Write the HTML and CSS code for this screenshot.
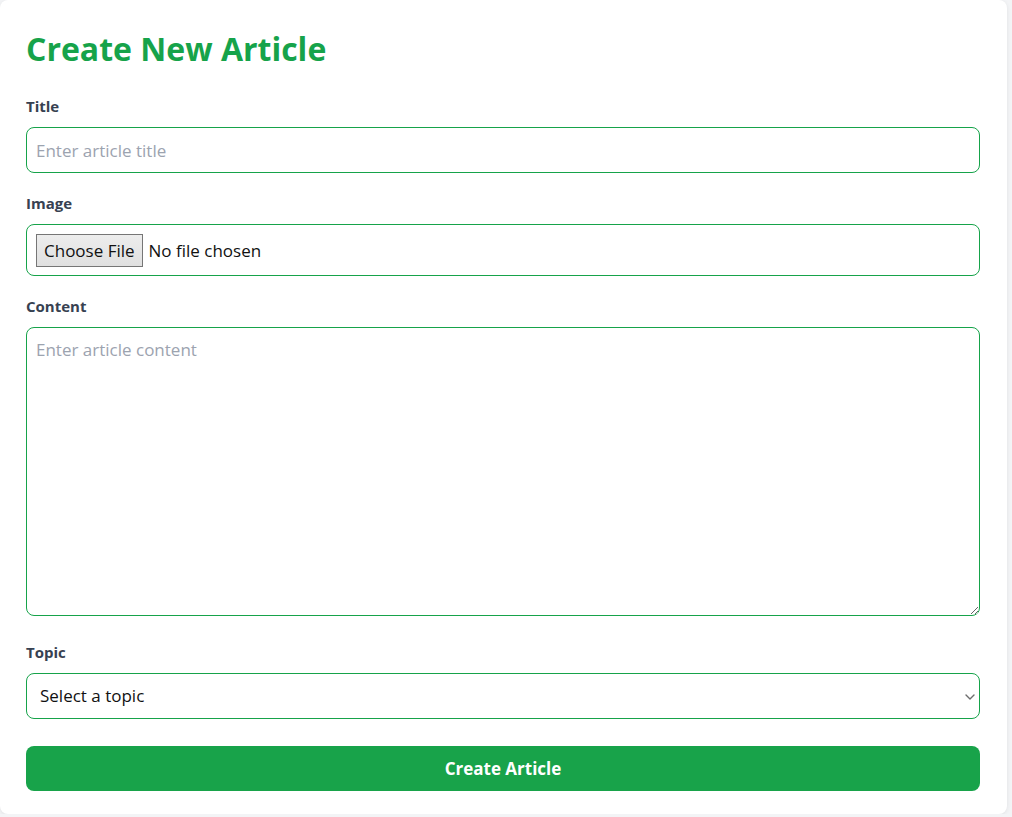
FILE: index.html
```html
<!DOCTYPE html>
<html lang="en">
<head>
<meta charset="utf-8">
<title>Create New Article</title>
<link rel="stylesheet" href="styles.css">
</head>
<body>
<main class="card">
  <h1 class="heading">Create New Article</h1>
  <form class="form">
    <div class="field">
      <label class="label" for="title">Title</label>
      <input class="control" id="title" type="text" placeholder="Enter article title">
    </div>
    <div class="field">
      <label class="label" for="image">Image</label>
      <input class="control control-file" id="image" type="file">
    </div>
    <div class="field field-area">
      <label class="label" for="content">Content</label>
      <textarea class="control control-area" id="content" placeholder="Enter article content"></textarea>
    </div>
    <div class="field">
      <label class="label" for="topic">Topic</label>
      <div class="select-wrap">
        <select class="control control-select" id="topic">
          <option>Select a topic</option>
        </select>
        <svg class="chevron" width="10" height="6" viewBox="0 0 10 6" aria-hidden="true">
          <path d="M1 1 L5 5 L9 1" fill="none" stroke="#6d6d6d" stroke-width="1.4" stroke-linecap="round" stroke-linejoin="round"/>
        </svg>
      </div>
    </div>
    <button class="submit" type="button">Create Article</button>
  </form>
</main>
</body>
</html>
```
FILE: styles.css
```css
* { box-sizing: border-box; }
html, body { margin: 0; }
body {
  background: #f3f4f6;
  font-family: "Open Sans", "Noto Sans", sans-serif;
  color: #1f2937;
}
.card {
  width: 1007px;
  background: #fff;
  border-radius: 8px;
  box-shadow: 0 1px 4px rgba(0, 0, 0, 0.08);
  padding: 29px 27px 23px 26px;
}
.heading {
  margin: 0 0 26px;
  font-size: 32px;
  line-height: 40px;
  font-weight: 700;
  color: #16a34a;
}
.form { display: flex; flex-direction: column; gap: 19px; }
.field { display: flex; flex-direction: column; }
.field-area { margin-bottom: 6px; }
.label {
  font-size: 15px;
  line-height: 22px;
  font-weight: 700;
  color: #374151;
  margin-bottom: 10px;
}
.control {
  width: 100%;
  height: 46px;
  font-family: inherit;
  font-size: 17px;
  line-height: 26px;
  color: #111;
  border: 1px solid #16a34a;
  border-radius: 8px;
  padding: 9px 9px;
  background: #fff;
  outline: none;
}
.control::placeholder { color: #9ca3af; }
.control-file { height: 52px; padding: 8.5px 9px; }
.control-file::file-selector-button {
  font-family: inherit;
  font-size: 17px;
  height: 33px;
  background: linear-gradient(#ededed, #e0e0e0);
  border: 1px solid #767676;
  border-radius: 0;
  padding: 0 7px;
  margin-right: 6px;
  color: #111;
}
.control-area { height: 289px; resize: vertical; display: block; }
.select-wrap { position: relative; }
.control-select {
  padding: 9px 30px 9px 13px;
  appearance: none;
  -webkit-appearance: none;
}
.chevron {
  position: absolute;
  right: 5px;
  top: 21px;
  pointer-events: none;
}
.submit {
  margin-top: 8px;
  height: 45px;
  border: none;
  border-radius: 8px;
  background: #18a34a;
  color: #fff;
  font-family: inherit;
  font-size: 17px;
  font-weight: 700;
}
```
